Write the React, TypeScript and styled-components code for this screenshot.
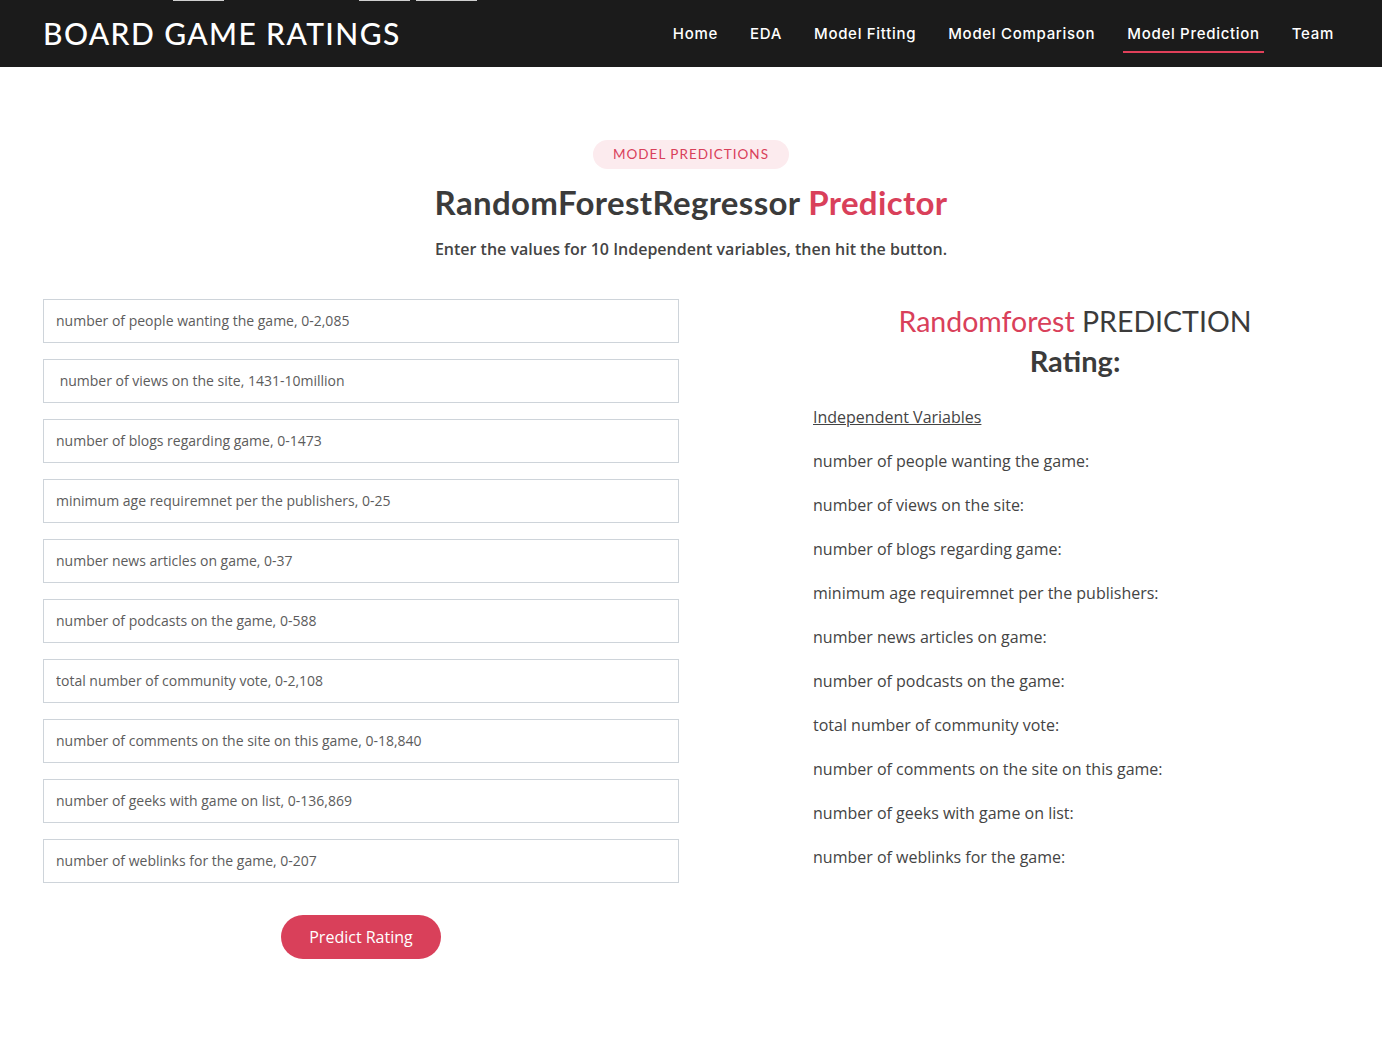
import React from "react";
import styled, { createGlobalStyle } from "styled-components";

const Global = createGlobalStyle`
  * { box-sizing: border-box; }
  body { margin: 0; background: #fff; font-family: "Open Sans", "Noto Sans", sans-serif; color: #444; }
`;

const Header = styled.header`
  position: relative;
  height: 67px;
  background: #1b1b1b;
  display: flex;
  align-items: center;
  justify-content: space-between;
  padding: 0 48px 0 43px;
`;

const TopMark = styled.span<{ $left: number; $w: number }>`
  position: absolute;
  top: 0;
  left: ${(p) => p.$left}px;
  width: ${(p) => p.$w}px;
  height: 1px;
  background: #cfcfcf;
`;

const Logo = styled.div`
  font-family: "Lato", "Noto Sans", sans-serif;
  font-size: 30px;
  font-weight: 500;
  color: #fff;
  letter-spacing: 1.4px;
  margin-top: -2px;
`;

const Nav = styled.nav`
  display: flex;
  gap: 32px;
  align-items: center;
`;

const NavLink = styled.a<{ $active?: boolean }>`
  font-family: "Inter", "Noto Sans", sans-serif;
  font-size: 15px;
  font-weight: 500;
  letter-spacing: 0.7px;
  color: #fff;
  text-decoration: none;
  padding: 6px 0;
  position: relative;
  &::after {
    content: "";
    display: ${(p) => (p.$active ? "block" : "none")};
    position: absolute;
    left: -4px;
    right: -4px;
    bottom: -4px;
    height: 2px;
    background: #e0405a;
  }
`;

const Section = styled.section`
  padding: 73px 43px 80px;
`;

const TitleBlock = styled.div`
  display: flex;
  flex-direction: column;
  align-items: center;
`;

const Badge = styled.span`
  display: inline-block;
  background: #fcebee;
  color: #d9405a;
  font-family: "Lato", "Noto Sans", sans-serif;
  font-size: 13.5px;
  letter-spacing: 1px;
  padding: 5px 20px;
  line-height: 19px;
  border-radius: 20px;
  text-transform: uppercase;
`;

const Title = styled.h2`
  margin: 13px 0 0;
  font-family: "Lato", "Noto Sans", sans-serif;
  font-size: 33px;
  font-weight: 700;
  letter-spacing: 0.35px;
  color: #3b3b3b;
  line-height: 40px;
`;

const Red = styled.span`
  color: #d9405a;
`;

const Subtitle = styled.p`
  margin: 15px 0 0;
  font-size: 16px;
  font-weight: 600;
  color: #444;
  line-height: 24px;
`;

const Grid = styled.div`
  display: grid;
  grid-template-columns: 636px 528px;
  column-gap: 132px;
  margin-top: 38px;
`;

const Form = styled.form`
  display: flex;
  flex-direction: column;
  gap: 16px;
`;

const Input = styled.input`
  width: 100%;
  height: 44px;
  border: 1px solid #ced4da;
  border-radius: 0;
  padding: 0 12px 1px;
  font-family: "Open Sans", sans-serif;
  font-size: 14px;
  color: #555;
  outline: none;
  &::placeholder { color: #5c5c5c; }
`;

const ButtonRow = styled.div`
  display: flex;
  justify-content: center;
  margin-top: 16px;
`;

const Button = styled.button`
  background: #d9405a;
  color: #fff;
  border: none;
  border-radius: 22px;
  height: 44px;
  padding: 0 28px;
  font-family: "Open Sans", sans-serif;
  font-size: 16px;
  cursor: pointer;
`;

const Result = styled.div`
  display: flex;
  flex-direction: column;
`;

const ResultHead = styled.h3`
  margin: 4px 0 0;
  text-align: center;
  font-family: "Lato", "Noto Sans", sans-serif;
  font-size: 28.5px;
  font-weight: 400;
  color: #3b3b3b;
  line-height: 36px;
`;

const Rating = styled.h3`
  margin: 5px 0 0;
  text-align: center;
  font-family: "Lato", "Noto Sans", sans-serif;
  font-size: 29px;
  font-weight: 700;
  color: #3b3b3b;
  line-height: 34px;
`;

const VarTitle = styled.p`
  margin: 27px 0 0 2px;
  font-size: 16px;
  line-height: 24px;
  text-decoration: underline;
  color: #444;
`;

const VarItem = styled.p`
  margin: 20px 0 0 2px;
  font-size: 16px;
  line-height: 24px;
  color: #444;
`;

const fields = [
  "number of people wanting the game, 0-2,085",
  " number of views on the site, 1431-10million",
  "number of blogs regarding game, 0-1473",
  "minimum age requiremnet per the publishers, 0-25",
  "number news articles on game, 0-37",
  "number of podcasts on the game, 0-588",
  "total number of community vote, 0-2,108",
  "number of comments on the site on this game, 0-18,840",
  "number of geeks with game on list, 0-136,869",
  "number of weblinks for the game, 0-207",
];

const vars = [
  "number of people wanting the game:",
  "number of views on the site:",
  "number of blogs regarding game:",
  "minimum age requiremnet per the publishers:",
  "number news articles on game:",
  "number of podcasts on the game:",
  "total number of community vote:",
  "number of comments on the site on this game:",
  "number of geeks with game on list:",
  "number of weblinks for the game:",
];

const links = ["Home", "EDA", "Model Fitting", "Model Comparison", "Model Prediction", "Team"];

export default function App() {
  return (
    <>
      <Global />
      <Header>
        <TopMark $left={173} $w={51} />
        <TopMark $left={359} $w={51} />
        <TopMark $left={416} $w={61} />
        <Logo>BOARD GAME RATINGS</Logo>
        <Nav>
          {links.map((l) => (
            <NavLink key={l} href="#" $active={l === "Model Prediction"}>
              {l}
            </NavLink>
          ))}
        </Nav>
      </Header>
      <Section>
        <TitleBlock>
          <Badge>Model Predictions</Badge>
          <Title>
            RandomForestRegressor <Red>Predictor</Red>
          </Title>
          <Subtitle>Enter the values for 10 Independent variables, then hit the button.</Subtitle>
        </TitleBlock>
        <Grid>
          <Form onSubmit={(e) => e.preventDefault()}>
            {fields.map((f, i) => (
              <Input key={i} placeholder={f} />
            ))}
            <ButtonRow>
              <Button type="submit">Predict Rating</Button>
            </ButtonRow>
          </Form>
          <Result>
            <ResultHead>
              <Red>Randomforest</Red> PREDICTION
            </ResultHead>
            <Rating>Rating:</Rating>
            <VarTitle>Independent Variables</VarTitle>
            {vars.map((v) => (
              <VarItem key={v}>{v}</VarItem>
            ))}
          </Result>
        </Grid>
      </Section>
    </>
  );
}
